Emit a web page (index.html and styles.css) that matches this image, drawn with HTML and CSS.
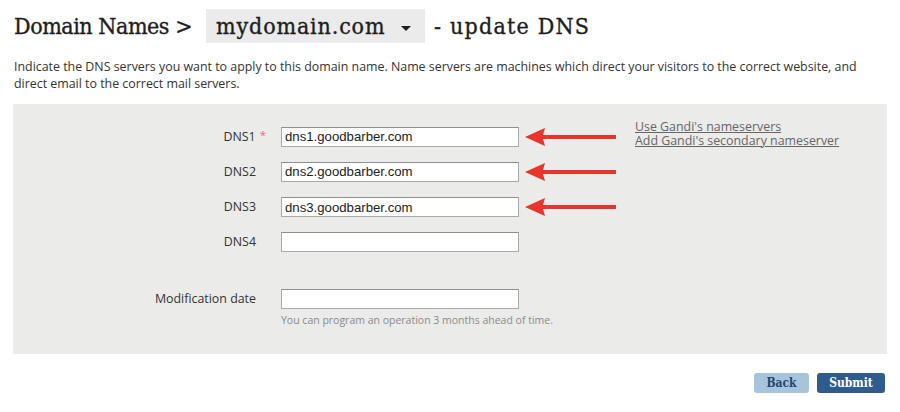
FILE: index.html
```html
<!DOCTYPE html>
<html lang="en">
<head>
<meta charset="utf-8">
<title>Domain Names - update DNS</title>
<link rel="stylesheet" href="styles.css">
</head>
<body>
<div class="page">
  <h1 class="title">
    <span class="crumb crumb-first">Domain Names &gt;</span>
    <span class="picker"><span class="picker-text">mydomain.com</span><span class="caret"></span></span>
    <span class="crumb crumb-last">- update DNS</span>
  </h1>
  <p class="intro">Indicate the DNS servers you want to apply to this domain name. Name servers are machines which direct your visitors to the correct website, and direct email to the correct mail servers.</p>

  <div class="panel">
    <div class="form">
      <label class="lbl">DNS1<span class="req">*</span></label>
      <div class="field"><input class="inp" type="text" value="dns1.goodbarber.com"></div>
      <div class="arrow-cell"><svg class="arrow" width="92" height="20" viewBox="0 0 92 20"><path d="M0 10 L20 1 L18 8 L91 8 L91 12 L18 12 L20 19 Z" fill="#e8342b"/></svg></div>
      <div class="links">
        <a class="lnk" href="#">Use Gandi's nameservers</a>
        <a class="lnk" href="#">Add Gandi's secondary nameserver</a>
      </div>

      <label class="lbl">DNS2</label>
      <div class="field"><input class="inp" type="text" value="dns2.goodbarber.com"></div>
      <div class="arrow-cell"><svg class="arrow" width="92" height="20" viewBox="0 0 92 20"><path d="M0 10 L20 1 L18 8 L91 8 L91 12 L18 12 L20 19 Z" fill="#e8342b"/></svg></div>

      <label class="lbl">DNS3</label>
      <div class="field"><input class="inp" type="text" value="dns3.goodbarber.com"></div>
      <div class="arrow-cell"><svg class="arrow" width="92" height="20" viewBox="0 0 92 20"><path d="M0 10 L20 1 L18 8 L91 8 L91 12 L18 12 L20 19 Z" fill="#e8342b"/></svg></div>

      <label class="lbl">DNS4</label>
      <div class="field"><input class="inp" type="text" value=""></div>

      <label class="lbl lbl-date">Modification date</label>
      <div class="field field-date">
        <input class="inp" type="text" value="">
        <div class="hint">You can program an operation 3 months ahead of time.</div>
      </div>
    </div>
  </div>

  <div class="actions">
    <button class="btn btn-back" type="button">Back</button>
    <button class="btn btn-submit" type="button">Submit</button>
  </div>
</div>
</body>
</html>
```

FILE: styles.css
```css
html, body {
  margin: 0;
  padding: 0;
  background: #ffffff;
}

.page {
  padding: 9px 13px 0 13px;
  font-family: "Open Sans", "Liberation Sans", sans-serif;
  color: #333333;
}

.title {
  display: flex;
  align-items: center;
  margin: 0;
  height: 34px;
  font-family: "DejaVu Serif Condensed", "DejaVu Serif", serif;
  font-stretch: condensed;
  font-weight: normal;
  font-size: 23px;
  color: #1e1e1e;
  -webkit-text-stroke: 0.35px #1e1e1e;
}

.crumb {
  padding-left: 1px;
  white-space: nowrap;
}

.crumb-first {
  letter-spacing: -0.45px;
}

.crumb-last {
  letter-spacing: 1.2px;
}

.picker {
  display: flex;
  align-items: center;
  box-sizing: border-box;
  width: 219px;
  height: 34px;
  margin: 0 8px 0 14px;
  padding: 0 0 0 10px;
  background: #ebebeb;
}

.picker-text {
  white-space: nowrap;
  letter-spacing: 0.85px;
}

.caret {
  display: inline-block;
  width: 0;
  height: 0;
  margin-left: auto;
  margin-right: 14px;
  margin-top: 4px;
  border-left: 5px solid transparent;
  border-right: 5px solid transparent;
  border-top: 5px solid #1e1e1e;
}

.intro {
  margin: 15px 0 0 1px;
  font-size: 12.4px;
  line-height: 17px;
  color: #333333;
}

.panel {
  margin-top: 12px;
  background: #ebebea;
  height: 250px;
  box-sizing: border-box;
  padding-top: 22.5px;
}

.form {
  display: grid;
  grid-template-columns: 268px 238px 116px 1fr;
  grid-auto-rows: auto;
  row-gap: 15.3px;
  align-items: start;
}

.lbl {
  grid-column: 1;
  text-align: right;
  padding-right: 25px;
  font-size: 12.4px;
  color: #333333;
  line-height: 20px;
}

.req {
  color: #e8637a;
  margin-left: 4px;
  margin-right: -10px;
  position: relative;
  top: -2px;
  font-size: 11.5px;
}

.field {
  grid-column: 2;
}

.inp {
  display: block;
  box-sizing: border-box;
  width: 238px;
  height: 20px;
  margin: 0;
  padding: 0 3px;
  border: 1px solid #a9a9a9;
  border-top-color: #8f8f8f;
  background: #ffffff;
  font-family: "Liberation Sans", Arial, sans-serif;
  font-size: 13.2px;
  color: #222222;
  outline: none;
}

.arrow-cell {
  grid-column: 3;
  height: 20px;
}

.arrow {
  display: block;
  margin-left: 6px;
}

.links {
  grid-column: 4;
  grid-row: 1 / span 3;
  display: flex;
  flex-direction: column;
  margin-top: -7px;
}

.lnk {
  font-size: 12.4px;
  line-height: 14px;
  color: #666666;
  text-decoration: underline;
}

.lbl-date,
.field-date {
  margin-top: 21.7px;
}

.hint {
  margin-top: 4px;
  font-size: 10.5px;
  line-height: 14px;
  color: #8a8a8a;
  white-space: nowrap;
}

.actions {
  display: flex;
  justify-content: flex-end;
  gap: 8px;
  margin-top: 19px;
  padding-right: 2px;
}

.btn {
  height: 20px;
  padding: 0;
  border: none;
  border-radius: 3px;
  font-family: "DejaVu Serif Condensed", "DejaVu Serif", serif;
  font-stretch: condensed;
  font-weight: bold;
  font-size: 12px;
  line-height: 20px;
}

.btn-back {
  width: 55px;
  background: #a6c4db;
  color: #24466e;
}

.btn-submit {
  width: 68px;
  background: #2f5c8f;
  color: #ffffff;
}
```
